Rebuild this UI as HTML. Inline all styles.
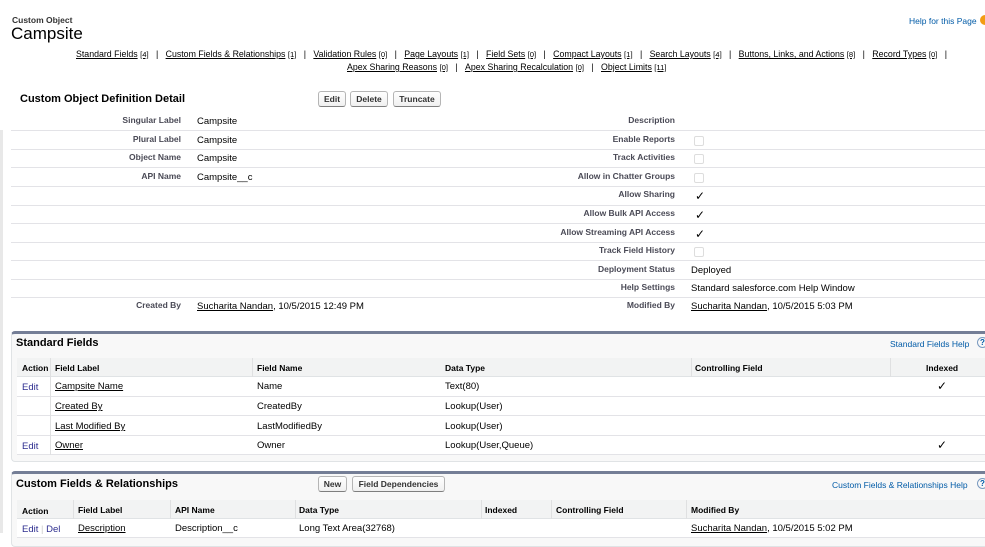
<!DOCTYPE html>
<html><head><meta charset="utf-8"><style>
*{margin:0;padding:0;box-sizing:border-box}
body{width:985px;height:547px;overflow:hidden;background:#fff;font-family:"Liberation Sans",Arial,sans-serif;font-size:9px;color:#000;position:relative}
.a{position:absolute;white-space:nowrap}
u{text-decoration:underline}
.lbl{font-weight:bold;color:#4a4a56;text-align:right;font-size:8.5px}
.val{font-size:9.5px}
.sep{position:absolute;left:11px;right:0;height:1px;background:#e3e3e7}
.btn{position:absolute;height:16px;border:1px solid #b5b5b5;border-bottom-color:#7f7f7f;border-radius:3px;background:linear-gradient(#fff,#f0f0f0);font-weight:bold;font-size:8.5px;color:#333;text-align:center;line-height:14px}
.box{position:absolute;left:11px;right:-5px;border-top:3px solid #747e96;border-left:1px solid #e0e3e5;border-bottom:1px solid #e0e3e5;border-radius:4px 0 0 4px;background:#f8f8f8}
.th{position:absolute;font-weight:bold;font-size:8.5px;color:#000}
.hrow{position:absolute;left:17px;right:0;background:#f2f3f3;border-bottom:1px solid #e0e3e5}
.row{position:absolute;left:17px;right:0;background:#fff;border-bottom:1px solid #e3e3e7}
.vd{position:absolute;width:1px;background:#dfe0e1}
.lnk{color:#015ba7}
.ed{color:#2d2d8f}
.cb{position:absolute;width:10px;height:10px;border:1px solid #ddd;border-radius:2px}
.ck{position:absolute;font-size:12px;line-height:12px}
.nav{font-size:8.8px}
.nav i{font-style:normal;font-size:7.7px;text-decoration:underline}
</style></head><body>
<div class="a" style="left:0;top:130px;width:3px;height:403px;background:#e8e8e8"></div>
<div class="a" style="left:12px;top:15px;font-size:8.5px;font-weight:bold;color:#333">Custom Object</div>
<div class="a" style="left:11px;top:24px;font-size:17px">Campsite</div>
<div class="a lnk" style="left:909px;top:16px;font-size:8.5px">Help for this Page</div>
<div class="a" style="left:980px;top:15px;width:10px;height:10px;border-radius:5px;background:#f39c12"></div>
<div class="a nav" style="left:76px;top:49px"><u>Standard Fields</u> <i>[4]</i> &nbsp;&nbsp;| &nbsp;&nbsp;<u>Custom Fields &amp; Relationships</u> <i>[1]</i> &nbsp;&nbsp;| &nbsp;&nbsp;<u>Validation Rules</u> <i>[0]</i> &nbsp;&nbsp;| &nbsp;&nbsp;<u>Page Layouts</u> <i>[1]</i> &nbsp;&nbsp;| &nbsp;&nbsp;<u>Field Sets</u> <i>[0]</i> &nbsp;&nbsp;| &nbsp;&nbsp;<u>Compact Layouts</u> <i>[1]</i> &nbsp;&nbsp;| &nbsp;&nbsp;<u>Search Layouts</u> <i>[4]</i> &nbsp;&nbsp;| &nbsp;&nbsp;<u>Buttons, Links, and Actions</u> <i>[8]</i> &nbsp;&nbsp;| &nbsp;&nbsp;<u>Record Types</u> <i>[0]</i> &nbsp;&nbsp;|</div>
<div class="a nav" style="left:347px;top:62px"><u>Apex Sharing Reasons</u> <i>[0]</i> &nbsp;&nbsp;| &nbsp;&nbsp;<u>Apex Sharing Recalculation</u> <i>[0]</i> &nbsp;&nbsp;| &nbsp;&nbsp;<u>Object Limits</u> <i>[11]</i></div>
<div class="a" style="left:20px;top:93px;font-size:11px;font-weight:bold">Custom Object Definition Detail</div>
<div class="btn" style="left:318px;top:91px;width:28px">Edit</div>
<div class="btn" style="left:350px;top:91px;width:38px">Delete</div>
<div class="btn" style="left:393px;top:91px;width:48px">Truncate</div>

<div class="sep" style="top:130px"></div><div class="sep" style="top:149px"></div><div class="sep" style="top:167px"></div><div class="sep" style="top:186px"></div><div class="sep" style="top:205px"></div><div class="sep" style="top:223px"></div><div class="sep" style="top:242px"></div><div class="sep" style="top:260px"></div><div class="sep" style="top:279px"></div><div class="sep" style="top:297px"></div>

<div class="a lbl" style="right:804px;top:115px">Singular Label</div><div class="a val" style="left:197px;top:116px">Campsite</div>
<div class="a lbl" style="right:804px;top:134px">Plural Label</div><div class="a val" style="left:197px;top:135px">Campsite</div>
<div class="a lbl" style="right:804px;top:152px">Object Name</div><div class="a val" style="left:197px;top:153px">Campsite</div>
<div class="a lbl" style="right:804px;top:171px">API Name</div><div class="a val" style="left:197px;top:172px">Campsite__c</div>
<div class="a lbl" style="right:804px;top:300px">Created By</div><div class="a val" style="left:197px;top:301px"><u>Sucharita Nandan</u>, 10/5/2015 12:49 PM</div>

<div class="a lbl" style="right:310px;top:115px">Description</div>
<div class="a lbl" style="right:310px;top:134px">Enable Reports</div><div class="cb" style="left:694px;top:136px"></div>
<div class="a lbl" style="right:310px;top:152px">Track Activities</div><div class="cb" style="left:694px;top:154px"></div>
<div class="a lbl" style="right:310px;top:171px">Allow in Chatter Groups</div><div class="cb" style="left:694px;top:173px"></div>
<div class="a lbl" style="right:310px;top:189px">Allow Sharing</div><div class="ck" style="left:695px;top:190px">✓</div>
<div class="a lbl" style="right:310px;top:208px">Allow Bulk API Access</div><div class="ck" style="left:695px;top:209px">✓</div>
<div class="a lbl" style="right:310px;top:227px">Allow Streaming API Access</div><div class="ck" style="left:695px;top:228px">✓</div>
<div class="a lbl" style="right:310px;top:245px">Track Field History</div><div class="cb" style="left:694px;top:247px"></div>
<div class="a lbl" style="right:310px;top:264px">Deployment Status</div><div class="a val" style="left:691px;top:265px">Deployed</div>
<div class="a lbl" style="right:310px;top:282px">Help Settings</div><div class="a val" style="left:691px;top:283px">Standard salesforce.com Help Window</div>
<div class="a lbl" style="right:310px;top:300px">Modified By</div><div class="a val" style="left:691px;top:301px"><u>Sucharita Nandan</u>, 10/5/2015 5:03 PM</div>

<div class="box" style="top:331px;height:131px"></div>
<div class="a" style="left:16px;top:337px;font-size:11px;font-weight:bold">Standard Fields</div>
<div class="a lnk" style="left:890px;top:339px;font-size:8.5px">Standard Fields Help</div>
<div class="a" style="left:977px;top:337px;width:11px;height:11px;border-radius:6px;border:1px solid #7a9ac0;color:#015ba7;font-size:8px;font-weight:bold;padding-left:2px;line-height:9px">?</div>
<div class="hrow" style="top:358px;height:19px"></div>
<div class="row" style="top:377px;height:20px"></div>
<div class="row" style="top:397px;height:19px"></div>
<div class="row" style="top:416px;height:20px"></div>
<div class="row" style="top:436px;height:19px"></div>
<div class="vd" style="left:50px;top:358px;height:97px"></div>
<div class="vd" style="left:252px;top:358px;height:19px"></div>
<div class="vd" style="left:691px;top:358px;height:19px"></div>
<div class="vd" style="left:890px;top:358px;height:19px"></div>
<div class="th" style="left:22px;top:363px">Action</div>
<div class="th" style="left:55px;top:363px">Field Label</div>
<div class="th" style="left:257px;top:363px">Field Name</div>
<div class="th" style="left:445px;top:363px">Data Type</div>
<div class="th" style="left:695px;top:363px">Controlling Field</div>
<div class="th" style="left:926px;top:363px">Indexed</div>
<div class="a val ed" style="left:22px;top:382px">Edit</div><div class="a val" style="left:55px;top:381px"><u>Campsite Name</u></div><div class="a val" style="left:257px;top:381px">Name</div><div class="a val" style="left:445px;top:381px">Text(80)</div><div class="ck" style="left:937px;top:380px">✓</div>
<div class="a val" style="left:55px;top:401px"><u>Created By</u></div><div class="a val" style="left:257px;top:401px">CreatedBy</div><div class="a val" style="left:445px;top:401px">Lookup(User)</div>
<div class="a val" style="left:55px;top:421px"><u>Last Modified By</u></div><div class="a val" style="left:257px;top:421px">LastModifiedBy</div><div class="a val" style="left:445px;top:421px">Lookup(User)</div>
<div class="a val ed" style="left:22px;top:441px">Edit</div><div class="a val" style="left:55px;top:440px"><u>Owner</u></div><div class="a val" style="left:257px;top:440px">Owner</div><div class="a val" style="left:445px;top:440px">Lookup(User,Queue)</div><div class="ck" style="left:937px;top:439px">✓</div>

<div class="box" style="top:471px;height:76px"></div>
<div class="a" style="left:16px;top:478px;font-size:11px;font-weight:bold">Custom Fields &amp; Relationships</div>
<div class="btn" style="left:318px;top:476px;width:29px">New</div>
<div class="btn" style="left:352px;top:476px;width:93px">Field Dependencies</div>
<div class="a lnk" style="left:832px;top:480px;font-size:8.5px">Custom Fields &amp; Relationships Help</div>
<div class="a" style="left:977px;top:478px;width:11px;height:11px;border-radius:6px;border:1px solid #7a9ac0;color:#015ba7;font-size:8px;font-weight:bold;padding-left:2px;line-height:9px">?</div>
<div class="hrow" style="top:500px;height:19px"></div>
<div class="row" style="top:519px;height:19px"></div>
<div class="vd" style="left:73px;top:500px;height:19px"></div>
<div class="vd" style="left:170px;top:500px;height:19px"></div>
<div class="vd" style="left:295px;top:500px;height:19px"></div>
<div class="vd" style="left:481px;top:500px;height:19px"></div>
<div class="vd" style="left:551px;top:500px;height:19px"></div>
<div class="vd" style="left:686px;top:500px;height:19px"></div>
<div class="th" style="left:22px;top:506px">Action</div>
<div class="th" style="left:78px;top:505px">Field Label</div>
<div class="th" style="left:175px;top:505px">API Name</div>
<div class="th" style="left:299px;top:505px">Data Type</div>
<div class="th" style="left:485px;top:505px">Indexed</div>
<div class="th" style="left:556px;top:505px">Controlling Field</div>
<div class="th" style="left:691px;top:505px">Modified By</div>
<div class="a val" style="left:22px;top:524px"><span class="ed">Edit</span> <span style="color:#ccc">|</span> <span class="ed">Del</span></div>
<div class="a val" style="left:78px;top:523px"><u>Description</u></div>
<div class="a val" style="left:175px;top:523px">Description__c</div>
<div class="a val" style="left:299px;top:523px">Long Text Area(32768)</div>
<div class="a val" style="left:691px;top:523px"><u>Sucharita Nandan</u>, 10/5/2015 5:02 PM</div>
</body></html>
